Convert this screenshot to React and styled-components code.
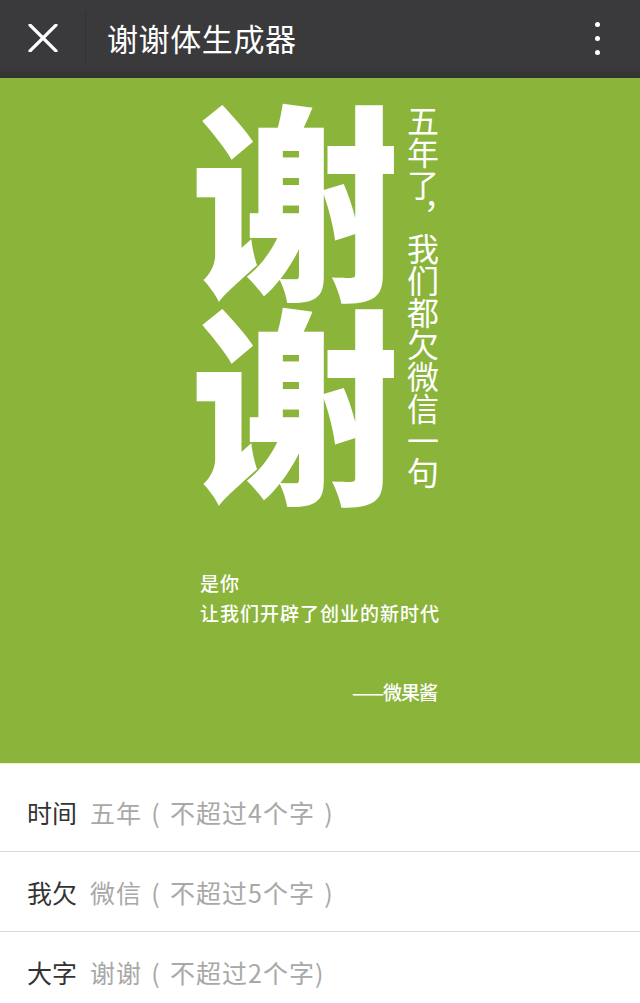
import React from "react";
import styled, { createGlobalStyle } from "styled-components";

const Global = createGlobalStyle`
  html, body { margin: 0; padding: 0; background: #ffffff; }
  body { font-family: "Noto Sans CJK SC", "Noto Sans", sans-serif; }
  * { box-sizing: border-box; }
`;

const Page = styled.div`
  width: 640px;
  display: flex;
  flex-direction: column;
`;

const TopBar = styled.header`
  height: 78px;
  background: linear-gradient(to bottom, #3a393b 0, #3a393b 68px, #2f3331 78px);
  display: flex;
  align-items: center;
  padding: 0 0 2px 0;
`;

const CloseButton = styled.button`
  width: 86px;
  height: 52px;
  border: 0;
  background: transparent;
  display: flex;
  align-items: center;
  padding: 0 0 0 28px;
  border-right: 1px solid #323133;
`;

const Title = styled.h1`
  margin: 0 0 0 21px;
  flex: 1;
  color: #ffffff;
  font-size: 31px;
  font-weight: 400;
  letter-spacing: 0.6px;
  line-height: 44px;
`;

const MoreButton = styled.button`
  width: 44px;
  height: 60px;
  margin-right: 21px;
  border: 0;
  background: transparent;
  display: flex;
  flex-direction: column;
  align-items: center;
  justify-content: center;
  gap: 9px;
  padding: 0;
`;

const Dot = styled.span`
  width: 5px;
  height: 5px;
  border-radius: 50%;
  background: #ffffff;
`;

const Poster = styled.section`
  height: 685px;
  background: #8ab43a;
  display: flex;
  justify-content: center;
`;

const PosterInner = styled.div`
  width: 250px;
  margin-left: -10px;
  padding-top: 12px;
  display: flex;
  flex-direction: column;
`;

const Hero = styled.div`
  display: flex;
  align-items: flex-start;
  gap: 5px;
`;

const BigChars = styled.div`
  font-size: 210px;
  font-weight: 900;
  line-height: 204px;
  color: #ffffff;
  width: 210px;
  word-break: break-all;
`;

const VerticalLine = styled.div`
  writing-mode: vertical-rl;
  font-size: 32px;
  line-height: 36px;
  color: #ffffff;
  font-weight: 400;
  margin-top: 15px;
`;

const Caption = styled.div`
  margin-top: 70px;
  padding-left: 10px;
  color: #ffffff;
  font-size: 19px;
  line-height: 30px;
  letter-spacing: 1px;
  font-weight: 500;
`;

const Signature = styled.div`
  margin-top: 50px;
  text-align: right;
  color: #ffffff;
  font-size: 19px;
  font-weight: 500;
  letter-spacing: -1px;
  padding-right: 3px;
`;

const Form = styled.div`
  padding-top: 9px;
  background: #ffffff;
  box-shadow: inset 0 1px 0 #e6f2cf;
`;

const Row = styled.label`
  height: 80px;
  display: flex;
  align-items: center;
  padding-left: 27px;
  border-bottom: ${(p) => (p.$last ? "0" : "1px solid #d8d8d8")};
  font-size: 25px;
`;

const Label = styled.span`
  color: #333333;
  width: 63px;
  flex: none;
`;

const Hint = styled.span`
  color: #a8a8a8;
  letter-spacing: 1px;
  white-space: pre;
`;

const CloseIcon = () => (
  <svg width="30" height="28" viewBox="0 0 30 28">
    <path d="M2 1 L28 27 M28 1 L2 27" stroke="#fff" strokeWidth="3.2" strokeLinecap="round" />
  </svg>
);

const fields = [
  { label: "时间", hint: "五年\u2004(\u2004不超过4个字\u2004)" },
  { label: "我欠", hint: "微信\u2004(\u2004不超过5个字\u2004)" },
  { label: "大字", hint: "谢谢\u2004(\u2004不超过2个字)" },
];

export default function App() {
  return (
    <Page>
      <Global />
      <TopBar>
        <CloseButton aria-label="关闭">
          <CloseIcon />
        </CloseButton>
        <Title>谢谢体生成器</Title>
        <MoreButton aria-label="更多">
          <Dot />
          <Dot />
          <Dot />
        </MoreButton>
      </TopBar>
      <Poster>
        <PosterInner>
          <Hero>
            <BigChars>谢谢</BigChars>
            <VerticalLine>五年了，我们都欠微信一句</VerticalLine>
          </Hero>
          <Caption>
            是你
            <br />
            让我们开辟了创业的新时代
          </Caption>
          <Signature>——微果酱</Signature>
        </PosterInner>
      </Poster>
      <Form>
        {fields.map((f, i) => (
          <Row key={f.label} $last={i === fields.length - 1}>
            <Label>{f.label}</Label>
            <Hint>{f.hint}</Hint>
          </Row>
        ))}
      </Form>
    </Page>
  );
}
